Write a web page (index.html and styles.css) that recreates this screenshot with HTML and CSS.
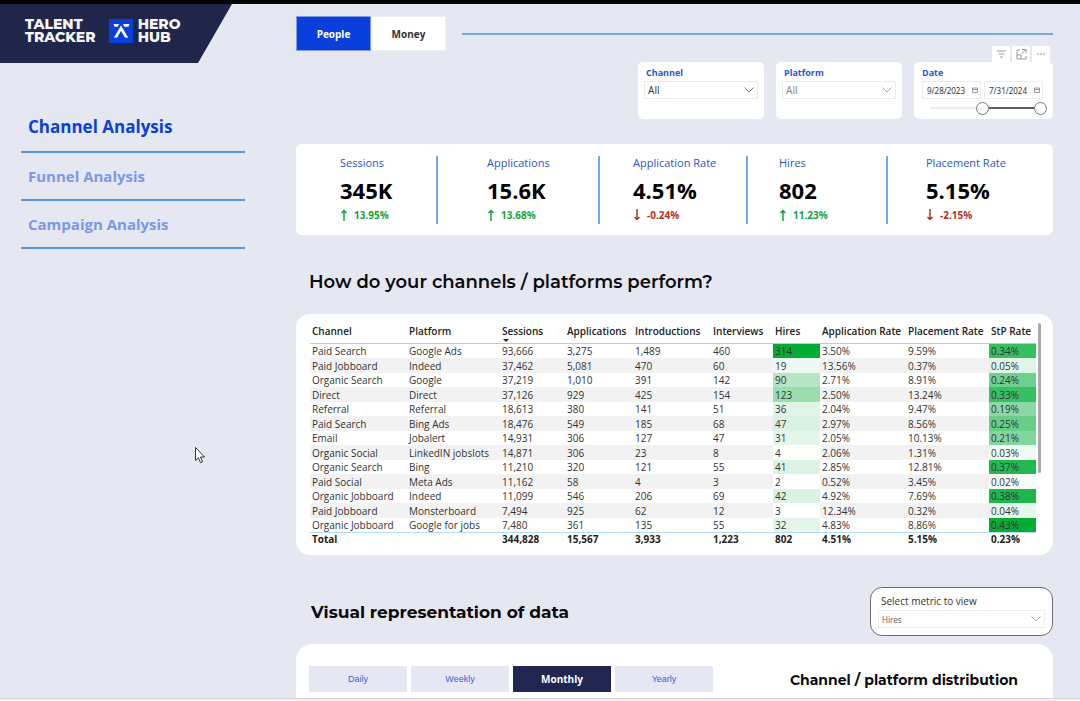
FILE: index.html
```html
<!DOCTYPE html>
<html lang="en">
<head>
  <meta charset="UTF-8">
  <meta name="viewport" content="width=device-width, initial-scale=1.0">
  <title>Talent Tracker</title>
  <link rel="stylesheet" href="styles.css">
</head>
<body>
  <div class="report">
    <aside class="sidebar">
      <header class="brand">
        <div class="brand-name">TALENT<br>TRACKER</div>
        <svg class="brand-logo" viewBox="0 0 24 24" aria-hidden="true">
          <rect width="24" height="24" fill="#0a3fdb"/>
          <path d="M4.500 5h5.500l-1.200 2.800H5.500zM14 5h6.500l-1 2.800h-4.300z" fill="#fff"/>
          <path d="M12 5.800L19.800 19h-4L12 12.500 8.300 19h-4z" fill="#fff" stroke="#0a3fdb" stroke-width="0.800"/>
        </svg>
        <div class="brand-name">HERO<br>HUB</div>
      </header>
      <nav class="menu">
        <a href="#channel" class="active">Channel Analysis</a>
        <a href="#funnel">Funnel Analysis</a>
        <a href="#campaign">Campaign Analysis</a>
      </nav>
    </aside>

    <main class="main">
      <div class="top-row">
        <div class="tabs">
          <button type="button" class="tab selected">People</button>
          <button type="button" class="tab">Money</button>
        </div>
        <div class="rule"></div>
      </div>

      <div class="filters">
        <div class="filter">
          <label for="channel">Channel</label>
          <div class="select-box">
            <select id="channel"><option>All</option></select>
            <svg viewBox="0 0 10 6"><path d="M0.500 0.500L5 5l4.500-4.500"/></svg>
          </div>
        </div>
        <div class="filter">
          <label for="platform">Platform</label>
          <div class="select-box muted">
            <select id="platform"><option>All</option></select>
            <svg viewBox="0 0 10 6"><path d="M0.500 0.500L5 5l4.500-4.500"/></svg>
          </div>
        </div>
        <div class="filter date-filter">
          <div class="visual-tools">
            <button type="button" aria-label="Filters">
              <svg viewBox="0 0 12 12"><path d="M2 3h9M3.500 6h6M5 9h3"/></svg>
            </button>
            <button type="button" aria-label="Focus mode">
              <svg viewBox="0 0 12 12"><path d="M5 2H2v9h9V8M7 1.500h4v4M11 1.500L6.500 6M2 7h4v4"/></svg>
            </button>
            <button type="button" aria-label="More options">
              <svg viewBox="0 0 12 12"><path d="M2 6h2M5 6h2M8 6h2"/></svg>
            </button>
          </div>
          <label for="date-from">Date</label>
          <div class="dates">
            <div class="date-box">
              <input type="text" id="date-from" value="9/28/2023">
              <svg viewBox="0 0 6 6"><path d="M0.500 1h5v4.500h-5zM0.500 2.500h5"/></svg>
            </div>
            <div class="date-box">
              <input type="text" id="date-to" aria-label="End date" value="7/31/2024">
              <svg viewBox="0 0 6 6"><path d="M0.500 1h5v4.500h-5zM0.500 2.500h5"/></svg>
            </div>
          </div>
          <div class="slider">
            <input type="range" aria-label="Range start" min="0" max="100" value="47">
            <input type="range" aria-label="Range end" min="0" max="100" value="100">
          </div>
        </div>
      </div>

      <section class="card kpis">
        <div class="kpi">
          <div class="kpi-label">Sessions</div>
          <div class="kpi-value">345K</div>
          <div class="kpi-delta up"><svg viewBox="0 0 8 12"><path d="M4 12V1.500M1.500 4L4 1.500 6.500 4"/></svg>13.95%</div>
        </div>
        <div class="divider"></div>
        <div class="kpi">
          <div class="kpi-label">Applications</div>
          <div class="kpi-value">15.6K</div>
          <div class="kpi-delta up"><svg viewBox="0 0 8 12"><path d="M4 12V1.500M1.500 4L4 1.500 6.500 4"/></svg>13.68%</div>
        </div>
        <div class="divider"></div>
        <div class="kpi">
          <div class="kpi-label">Application Rate</div>
          <div class="kpi-value">4.51%</div>
          <div class="kpi-delta down"><svg viewBox="0 0 8 12"><path d="M4 0v10.500M1.500 8L4 10.500 6.500 8"/></svg>-0.24%</div>
        </div>
        <div class="divider"></div>
        <div class="kpi">
          <div class="kpi-label">Hires</div>
          <div class="kpi-value">802</div>
          <div class="kpi-delta up"><svg viewBox="0 0 8 12"><path d="M4 12V1.500M1.500 4L4 1.500 6.500 4"/></svg>11.23%</div>
        </div>
        <div class="divider"></div>
        <div class="kpi">
          <div class="kpi-label">Placement Rate</div>
          <div class="kpi-value">5.15%</div>
          <div class="kpi-delta down"><svg viewBox="0 0 8 12"><path d="M4 0v10.500M1.500 8L4 10.500 6.500 8"/></svg>-2.15%</div>
        </div>
      </section>

      <h2 class="table-title">How do your channels / platforms perform?</h2>

      <section class="card table-card">
        <table>
          <colgroup>
            <col class="c-channel"><col class="c-platform"><col class="c-sessions"><col class="c-apps"><col class="c-intros">
            <col class="c-interviews"><col class="c-hires"><col class="c-apprate"><col class="c-placement"><col class="c-stp">
          </colgroup>
          <thead>
            <tr><th>Channel</th><th>Platform</th><th class="sorted">Sessions</th><th>Applications</th><th>Introductions</th><th>Interviews</th><th>Hires</th><th>Application Rate</th><th>Placement Rate</th><th>StP Rate</th></tr>
          </thead>
          <tbody>
            <tr><td>Paid Search</td><td>Google Ads</td><td>93,666</td><td>3,275</td><td>1,489</td><td>460</td><td style="background:#03ad35">314</td><td>3.50%</td><td>9.59%</td><td style="background:#36be61">0.34%</td></tr>
            <tr><td>Paid Jobboard</td><td>Indeed</td><td>37,462</td><td>5,081</td><td>470</td><td>60</td><td style="background:#eef9f1">19</td><td>13.56%</td><td>0.37%</td><td style="background:#e0f5e7">0.05%</td></tr>
            <tr><td>Organic Search</td><td>Google</td><td>37,219</td><td>1,010</td><td>391</td><td>142</td><td style="background:#b6e5c5">90</td><td>2.71%</td><td>8.91%</td><td style="background:#6ed08e">0.24%</td></tr>
            <tr><td>Direct</td><td>Direct</td><td>37,126</td><td>929</td><td>425</td><td>154</td><td style="background:#9adeb0">123</td><td>2.50%</td><td>13.24%</td><td style="background:#38bf62">0.33%</td></tr>
            <tr><td>Referral</td><td>Referral</td><td>18,613</td><td>380</td><td>141</td><td>51</td><td style="background:#def4e5">36</td><td>2.04%</td><td>9.47%</td><td style="background:#8ad9a4">0.19%</td></tr>
            <tr><td>Paid Search</td><td>Bing Ads</td><td>18,476</td><td>549</td><td>185</td><td>68</td><td style="background:#d9f2e1">47</td><td>2.97%</td><td>8.56%</td><td style="background:#67ce88">0.25%</td></tr>
            <tr><td>Email</td><td>Jobalert</td><td>14,931</td><td>306</td><td>127</td><td>47</td><td style="background:#e3f6e9">31</td><td>2.05%</td><td>10.13%</td><td style="background:#80d69c">0.21%</td></tr>
            <tr><td>Organic Social</td><td>LinkedIN jobslots</td><td>14,871</td><td>306</td><td>23</td><td>8</td><td style="background:#fcfefc">4</td><td>2.06%</td><td>1.31%</td><td style="background:#effaf2">0.03%</td></tr>
            <tr><td>Organic Search</td><td>Bing</td><td>11,210</td><td>320</td><td>121</td><td>55</td><td style="background:#dbf3e2">41</td><td>2.85%</td><td>12.81%</td><td style="background:#24b853">0.37%</td></tr>
            <tr><td>Paid Social</td><td>Meta Ads</td><td>11,162</td><td>58</td><td>4</td><td>3</td><td style="background:#ffffff">2</td><td>0.52%</td><td>3.45%</td><td style="background:#f6fcf8">0.02%</td></tr>
            <tr><td>Organic Jobboard</td><td>Indeed</td><td>11,099</td><td>546</td><td>206</td><td>69</td><td style="background:#dbf3e2">42</td><td>4.92%</td><td>7.69%</td><td style="background:#1fb64e">0.38%</td></tr>
            <tr><td>Paid Jobboard</td><td>Monsterboard</td><td>7,494</td><td>925</td><td>62</td><td>12</td><td style="background:#fdfefd">3</td><td>12.34%</td><td>0.32%</td><td style="background:#e6f7eb">0.04%</td></tr>
            <tr><td>Organic Jobboard</td><td>Google for jobs</td><td>7,480</td><td>361</td><td>135</td><td>55</td><td style="background:#e3f6e9">32</td><td>4.83%</td><td>8.86%</td><td style="background:#03ad35">0.43%</td></tr>
          </tbody>
          <tfoot>
            <tr><td>Total</td><td></td><td>344,828</td><td>15,567</td><td>3,933</td><td>1,223</td><td>802</td><td>4.51%</td><td>5.15%</td><td>0.23%</td></tr>
          </tfoot>
        </table>
        <div class="scroll-thumb"></div>
      </section>

      <div class="visual-row">
        <h2>Visual representation of data</h2>
        <div class="metric">
          <label for="metric">Select metric to view</label>
          <div class="select-box muted">
            <select id="metric"><option>Hires</option></select>
            <svg viewBox="0 0 10 6"><path d="M0.500 0.500L5 5l4.500-4.500"/></svg>
          </div>
        </div>
      </div>

      <section class="card chart-card">
        <div class="periods">
          <button type="button">Daily</button>
          <button type="button">Weekly</button>
          <button type="button" class="selected">Monthly</button>
          <button type="button">Yearly</button>
        </div>
        <h3>Channel / platform distribution</h3>
      </section>
    </main>

    <svg class="pointer" viewBox="0 0 10 17" aria-hidden="true">
      <path d="M0.500 0.500v13l3-2.800 2 5 2-0.900-2-4.800h4z" fill="#fff" stroke="#222" stroke-width="0.900"/>
    </svg>
  </div>
</body>
</html>
```

FILE: styles.css
```css
* {
  box-sizing: border-box;
}
body {
  margin: 0;
  height: 100vh;
  overflow: hidden;
  background-color: #e5e7f1;
  border-top: 4px solid #000;
  border-bottom: 2px solid #f1f1f3;
  font-family: 'Segoe UI', 'Open Sans', 'Noto Sans', sans-serif;
  font-size: 10px;
  color: #333;
}
button, input, select {
  font-family: inherit;
  margin: 0;
  padding: 0;
  border: none;
  border-radius: 0;
  background: none;
  color: inherit;
}
input, select {
  font-family: 'Segoe UI', 'Noto Sans', sans-serif;
}
button, select {
  cursor: pointer;
}
h2, h3 {
  margin: 0;
  font-family: Montserrat, Inter, sans-serif;
  font-weight: 700;
  color: #0b0b0f;
}
h2 {
  font-size: 17px;
  line-height: 24px;
}
h3 {
  font-size: 14px;
  line-height: 20px;
}
.report {
  position: relative;
  display: flex;
  height: 100%;
  overflow: hidden;
  border-bottom: 1px solid #d5d6dc;
}

/* sidebar */
.sidebar {
  flex: 0 0 266px;
}
.brand {
  display: flex;
  align-items: center;
  gap: 5px;
  width: 232px;
  height: 59px;
  padding: 0 0 5px 25px;
  background-color: #20264a;
  clip-path: polygon(0 0, 100% 0, 198px 100%, 0 100%);
}
.brand-name {
  font-family: Montserrat, Inter, sans-serif;
  font-size: 14px;
  font-weight: 800;
  line-height: 13px;
  color: #f5f5f5;
}
.brand-logo {
  width: 24px;
  height: 24px;
  margin-left: 8px;
}
.menu {
  padding: 42px 21px 0;
}
.menu a {
  display: block;
  height: 48px;
  padding-left: 7px;
  border-bottom: 2px solid #5b97d8;
  font-size: 15px;
  font-weight: 700;
  line-height: 47px;
  color: #7b98e8;
  text-decoration: none;
}
.menu a.active {
  font-size: 17px;
  line-height: 43px;
  color: #0a3fdb;
}

/* main column */
.main {
  flex: 1;
  min-width: 0;
  padding: 12px 27px 0 30px;
}
.top-row {
  display: flex;
  align-items: center;
  gap: 16px;
}
.tabs {
  display: flex;
}
.tab {
  width: 75px;
  height: 35px;
  border: 1px solid #eef0f6;
  background-color: #fff;
  font-size: 10px;
  font-weight: 700;
}
.tab.selected {
  border-color: #7f9bea;
  background-color: #0a3fdb;
  color: #fff;
}
.rule {
  flex: 1;
  height: 2px;
  background-color: #78a9de;
}
.card {
  background-color: #fff;
  border-radius: 12px;
}

/* filters */
.filters {
  display: flex;
  justify-content: flex-end;
  gap: 12px;
  margin-top: 11px;
}
.filter {
  position: relative;
  width: 126px;
  height: 57px;
  padding: 4px 6px;
  background-color: #fff;
  border-radius: 5px;
}
.filter label {
  display: block;
  padding-left: 2px;
  font-size: 9px;
  font-weight: 700;
  line-height: 13px;
  color: #2a55dc;
}
.select-box {
  position: relative;
  height: 18px;
  margin-top: 2px;
  border: 1px solid #ececec;
}
.select-box select {
  appearance: none;
  display: block;
  width: 100%;
  height: 100%;
  padding-left: 3px;
  font-size: 10px;
  color: #444;
}
.select-box svg {
  position: absolute;
  right: 3px;
  top: 5px;
  width: 10px;
  height: 6px;
  fill: none;
  stroke: #777;
  pointer-events: none;
}
.select-box.muted select {
  color: #888;
}
.select-box.muted svg {
  stroke: #aaa;
}
.date-filter {
  width: 139px;
}
.visual-tools {
  position: absolute;
  right: 3px;
  bottom: 100%;
  display: flex;
  gap: 2px;
}
.visual-tools button {
  width: 18px;
  height: 16px;
  background-color: #fff;
}
.visual-tools svg {
  display: block;
  width: 12px;
  height: 12px;
  margin: 0 auto;
  fill: none;
  stroke: #999;
}
.dates {
  display: flex;
  gap: 3px;
  margin: 2px 4px 0 2px;
}
.date-box {
  display: flex;
  align-items: center;
  flex: 1;
  min-width: 0;
  height: 18px;
  padding: 0 2px 0 4px;
  border: 1px solid #ececec;
}
.date-box input {
  flex: 1;
  min-width: 0;
  width: 0;
  font-size: 8px;
}
.date-box svg {
  width: 6px;
  height: 6px;
  fill: none;
  stroke: #999;
}
.slider {
  position: relative;
  height: 14px;
  margin: 2px 0 0 4px;
  background: linear-gradient(90deg, #ececec 47%, #5a6068 47%) center / 112px 2px no-repeat;
}
.slider input {
  appearance: none;
  position: absolute;
  left: 0;
  top: 0;
  width: 100%;
  height: 14px;
  pointer-events: none;
}
.slider input::-webkit-slider-thumb {
  appearance: none;
  width: 13px;
  height: 13px;
  border: 1px solid #777;
  border-radius: 50%;
  background-color: #fff;
  pointer-events: auto;
}

/* kpi strip */
.kpis {
  display: grid;
  grid-template-columns: 96fr 51fr 111fr 35fr 113fr 33fr 107fr 40fr 127fr;
  margin-top: 25px;
  padding: 12px 0 11px 44px;
  border-radius: 6px;
  white-space: nowrap;
}
.divider {
  border-left: 2px solid #78a9de;
}
.kpi-label {
  font-size: 11px;
  line-height: 14px;
  color: #2a55cf;
}
.kpi-value {
  padding-top: 5px;
  font-size: 22px;
  font-weight: 700;
  line-height: 30px;
  color: #000;
}
.kpi-delta {
  display: flex;
  align-items: center;
  gap: 6px;
  padding: 3px 0 2px;
  font-size: 10px;
  font-weight: 700;
  line-height: 14px;
}
.kpi-delta svg {
  width: 8px;
  height: 12px;
  fill: none;
  stroke: currentColor;
  stroke-width: 1.500;
}
.up {
  color: #12a53c;
}
.down {
  color: #b3301c;
}

/* table */
.table-title {
  margin: 35px 0 20px 13px;
  font-size: 18px;
  font-weight: 600;
}
.table-card {
  position: relative;
  padding: 4px 17px 10px 14px;
  border-radius: 14px;
}
table {
  width: 100%;
  table-layout: fixed;
  border-spacing: 0;
}
.c-channel { width: 97px; }
.c-platform { width: 93px; }
.c-sessions { width: 65px; }
.c-apps { width: 68px; }
.c-intros { width: 78px; }
.c-interviews { width: 62px; }
.c-hires { width: 47px; }
.c-apprate { width: 86px; }
.c-placement { width: 83px; }
.c-stp { width: 47px; }
th, td {
  padding: 0 0 0 2px;
  text-align: left;
  white-space: nowrap;
  line-height: 14px;
}
th {
  height: 26px;
  border-bottom: 1px solid #9fd0f7;
  font-weight: 600;
  color: #222;
}
.sorted {
  position: relative;
}
.sorted::after {
  content: '';
  position: absolute;
  left: 3px;
  bottom: 1px;
  border: 3px solid transparent;
  border-top-color: #222;
  border-bottom: none;
}
tbody tr:nth-child(even) {
  height: 15px;
  background-color: #f2f2f2;
}
tfoot td {
  border-top: 1px solid #b5dcf8;
  font-weight: 700;
  line-height: 12px;
  color: #222;
}
.scroll-thumb {
  position: absolute;
  right: 12px;
  top: 9px;
  width: 3px;
  height: 150px;
  border-radius: 2px;
  background-color: #aaa;
}

/* chart area */
.visual-row {
  display: flex;
  justify-content: space-between;
  align-items: center;
  margin: 32px 0 8px 15px;
}
.metric {
  width: 183px;
  height: 49px;
  padding: 6px 7px;
  border: 1px solid #6c6c74;
  border-radius: 12px;
  background-color: #fff;
}
.metric label {
  display: block;
  padding-left: 3px;
  line-height: 14px;
}
.metric .select-box select {
  font-size: 8px;
  color: #667;
}
.chart-card {
  display: flex;
  justify-content: space-between;
  padding: 22px 35px 40px 13px;
  border-radius: 16px;
}
.periods {
  display: flex;
  gap: 4px;
}
.periods button {
  width: 98px;
  height: 26px;
  background-color: #e5e8f2;
  font-family: 'Liberation Sans', Arial, sans-serif;
  font-size: 9px;
  color: #3a62dc;
}
.periods .selected {
  background-color: #20264f;
  font-family: inherit;
  font-size: 10px;
  font-weight: 700;
  color: #fff;
}
.chart-card h3 {
  padding-top: 4px;
}

.pointer {
  position: absolute;
  left: 195px;
  top: 443px;
  width: 10px;
  height: 17px;
}
```
